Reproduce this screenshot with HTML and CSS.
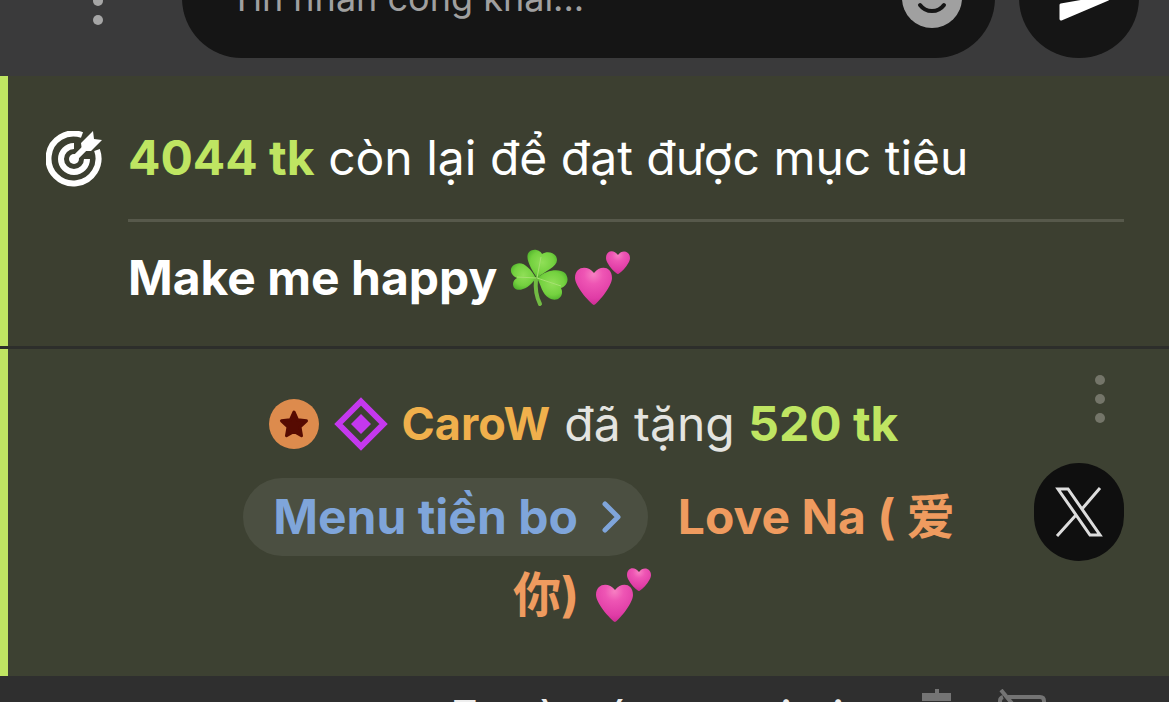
FILE: index.html
```
<!DOCTYPE html>
<html lang="vi">
<head>
    <meta charset="UTF-8">
    <meta name="viewport" content="width=device-width, initial-scale=1.0">
    <title>Chat</title>
    <link rel="stylesheet" href="styles.css">
</head>
<body>
    <svg class="sprite" aria-hidden="true">
        <defs>
            <radialGradient id="pink" cx="50%" cy="18%" r="85%">
                <stop offset="0" stop-color="#f77fc2"/>
                <stop offset="0.3" stop-color="#ee55b4"/>
                <stop offset="0.75" stop-color="#e03ca6"/>
                <stop offset="1" stop-color="#c92a91"/>
            </radialGradient>
            <radialGradient id="leaf" cx="50%" cy="45%" r="60%">
                <stop offset="0" stop-color="#90df57"/>
                <stop offset="0.65" stop-color="#74d13f"/>
                <stop offset="1" stop-color="#4fb02c"/>
            </radialGradient>
            <symbol id="hearts" viewBox="0 0 58 58">
                <path fill="url(#pink)" d="M20 56C18 56 1 38 1 29C1 17 14 16 20 24C26 16 38 17 38 29C38 38 22 56 20 56Z"/>
                <path fill="url(#pink)" d="M44 25C42 25 32 15 32 9C32 1 40 0 44 6C48 0 56 2 56 9C56 15 46 25 44 25Z"/>
            </symbol>
        </defs>
    </svg>

    <header class="topbar">
        <button class="dots" type="button" aria-label="Menu"><i></i><i></i><i></i></button>
        <form class="composer">
            <input class="composer-input" type="text" placeholder="Tin nhắn công khai..." aria-label="Tin nhắn công khai">
            <button class="emoji-btn" type="button" aria-label="Emoji">
                <svg viewBox="0 0 60 60" width="60" height="60">
                    <circle cx="30" cy="30" r="30" fill="#a0a0a0"/>
                    <circle cx="20" cy="22" r="4" fill="#151515"/>
                    <circle cx="40" cy="22" r="4" fill="#151515"/>
                    <path d="M18 37C24 45 36 45 42 37" fill="none" stroke="#151515" stroke-width="4" stroke-linecap="round"/>
                </svg>
            </button>
        </form>
        <button class="send" type="button" aria-label="Gửi">
            <svg viewBox="0 0 60 60" width="60" height="60">
                <path fill="#fff" stroke="#fff" stroke-width="3" stroke-linejoin="round" d="M12 10L59 31L12 51V37L46 31L12 25Z"/>
            </svg>
        </button>
    </header>

    <main>
        <section class="goal">
            <svg class="goal-icon" viewBox="0 0 56 56" width="56" height="56">
                <g fill="none" stroke="#fff">
                    <path stroke-width="6" d="M36 4A25 25 0 1 0 51 19"/>
                    <path stroke-width="6" d="M28 15A13 13 0 1 0 41 28"/>
                    <path stroke-width="6" d="M28 28L41 15"/>
                </g>
                <circle cx="28" cy="28" r="5" fill="#fff"/>
                <path fill="#fff" d="M35 12L47 0L48 8L56 9L45 20L36 20Z"/>
            </svg>
            <div class="goal-body">
                <p class="goal-left"><b class="tokens">4044 tk</b> còn lại để đạt được mục tiêu</p>
                <p class="goal-title">Make me happy
                    <svg class="emoji" viewBox="0 0 58 58" width="58" height="58">
                        <path fill="none" stroke="#72bb43" stroke-width="4" stroke-linecap="round" d="M26 30C25 40 27 49 30 55"/>
                        <g fill="url(#leaf)">
                            <path d="M27 29C22 21 14 9 19 3C24-2 31 2 32 5C38 1 47 4 47 11C47 18 35 22 27 29Z"/>
                            <path d="M26 29C17 43 3 44 3 35C3 32 5 30 7 29C-1 26-1 17 6 15C13 12 20 19 26 29Z"/>
                            <path d="M27 29C36 21 49 19 55 24C60 30 57 37 51 39C55 47 47 54 39 49C32 45 31 36 27 29Z"/>
                        </g>
                        <path fill="none" stroke="#a5e070" stroke-width="1" d="M27 29L31 8M26 29L7 28M27 29L51 37"/>
                    </svg>
                    <svg class="emoji" width="58" height="58"><use href="#hearts"/></svg>
                </p>
            </div>
        </section>

        <section class="tip">
            <div class="tip-body">
                <div class="tip-row first">
                    <svg class="badge" viewBox="0 0 52 52" width="52" height="52">
                        <circle cx="26" cy="26" r="25" fill="#dd8b4d"/>
                        <path fill="#560b02" stroke="#560b02" stroke-width="3" stroke-linejoin="round" d="M26 14L29.600 21.800L38.500 22.800L32 29L33.500 37.800L26 33.500L18.500 37.800L20 29L13.500 22.800L22.400 21.800Z"/>
                    </svg>
                    <svg class="badge" viewBox="0 0 54 54" width="54" height="54">
                        <path fill="none" stroke="#c438ee" stroke-width="6" d="M27 4.500L49.500 27L27 49.500L4.500 27Z"/>
                        <path fill="#c438ee" d="M27 17L37 27L27 37L17 27Z"/>
                    </svg>
                    <a class="user" href="#">CaroW</a>
                    <span class="action">đã tặng <b class="tokens">520 tk</b></span>
                </div>
                <div class="tip-row">
                    <button class="menu-btn" type="button">Menu tiền bo
                        <svg viewBox="0 0 20 32" width="20" height="32">
                            <path d="M3 3L16 16L3 29" fill="none" stroke="#7fa5da" stroke-width="5" stroke-linecap="round" stroke-linejoin="round"/>
                        </svg>
                    </button>
                    <span class="item">Love Na ( 爱</span>
                </div>
                <div class="tip-row">
                    <span class="item">你)</span>
                    <svg class="emoji" width="58" height="58"><use href="#hearts"/></svg>
                </div>
            </div>
            <div class="tip-actions">
                <button class="dots" type="button" aria-label="Thêm"><i></i><i></i><i></i></button>
                <a class="share" href="#" aria-label="X">
                    <svg viewBox="0 0 48 50" width="48" height="50">
                        <path fill="none" stroke="#ddd" stroke-width="3" d="M3 2H13L45 48H35ZM45 1L27 22M21 28L2 49"/>
                    </svg>
                </a>
            </div>
        </section>

        <section class="next">
            <span>Em à có xem ai ai</span>
            <svg viewBox="0 0 32 50" width="32" height="50">
                <path fill="#747474" d="M14 0H18V4H30V12H1V4H14Z"/>
            </svg>
            <svg viewBox="0 0 48 50" width="48" height="50">
                <path fill="none" stroke="#747474" stroke-width="4" d="M3 1L40 46M10 8H42Q46 8 46 12V40M2 40V12Q2 9 5 8"/>
            </svg>
        </section>
    </main>
</body>
</html>
```
FILE: styles.css
```
* {
    box-sizing: border-box;
}
body {
    margin: 0;
    height: 100vh;
    display: flex;
    flex-direction: column;
    overflow: hidden;
    background: #2f2f2f;
    color: #fff;
    font-family: Inter, "Noto Sans CJK SC", sans-serif;
    font-size: 48px;
    line-height: 78px;
}
p {
    margin: 0;
}
a {
    text-decoration: none;
}
button {
    border: none;
    padding: 0;
    background: none;
    font: inherit;
    color: inherit;
    cursor: pointer;
}
svg {
    flex-shrink: 0;
}
main {
    flex: 1;
    min-height: 0;
    overflow: hidden;
}
.sprite {
    position: absolute;
    width: 0;
    height: 0;
}

/* top bar, scrolled half out of view */
.topbar {
    display: flex;
    align-items: flex-end;
    height: 76px;
    flex-shrink: 0;
    padding: 0 30px 18px 74px;
    overflow: hidden;
    background: #3a3a3b;
}
.dots {
    display: flex;
    flex-direction: column;
    align-items: center;
    gap: 9px;
    width: 48px;
}
.dots i {
    width: 10px;
    height: 10px;
    border-radius: 50%;
    background: #747569;
}
.topbar .dots {
    margin: 0 60px 33px 0;
}
.topbar .dots i {
    background: #a6a6a6;
}
.composer {
    display: flex;
    flex: 1;
    align-items: center;
    height: 120px;
    margin-right: 24px;
    padding: 0 33px 0 48px;
    border-radius: 60px;
    background: #151515;
}
.composer-input {
    flex: 1;
    min-width: 0;
    padding: 0;
    border: none;
    outline: none;
    background: none;
    color: #fff;
    font: 36px/60px Inter, sans-serif;
}
.composer-input::placeholder {
    color: #a0a0a0;
}
.emoji-btn {
    height: 60px;
    line-height: 0;
}
.send {
    display: flex;
    align-items: center;
    justify-content: center;
    width: 120px;
    height: 120px;
    border-radius: 50%;
    background: #151515;
}

/* goal */
.goal {
    display: flex;
    align-items: flex-start;
    gap: 26px;
    padding: 43px 45px 29px 38px;
    border-left: 8px solid #bfe562;
    background: #3c3f30;
}
.goal-icon {
    margin-top: 12px;
}
.goal-body {
    flex: 1;
}
.goal-left {
    padding-bottom: 22px;
    border-bottom: 3px solid #57594b;
}
.goal-title {
    display: flex;
    align-items: center;
    padding-top: 17px;
    font-weight: 700;
}
.goal-title .emoji:first-of-type {
    margin: 0 6px 0 13px;
}
.tokens {
    color: #bfe562;
}

/* tip message */
.tip {
    display: flex;
    padding: 26px 45px 42px 132px;
    border-top: 3px solid #2d2e2b;
    background: #3d4132;
    box-shadow: inset 8px 0 #bfe562;
}
.tip-body {
    flex: 1;
    padding-top: 10px;
}
.tip-row {
    display: flex;
    justify-content: center;
    align-items: center;
    white-space: nowrap;
}
.tip-row.first {
    margin-bottom: 15px;
}
.badge {
    margin-right: 14px;
}
.user {
    margin-right: 14px;
    color: #f0b04c;
    font-size: 45px;
    font-weight: 700;
}
.action {
    color: #e4e4e0;
}
.menu-btn {
    display: flex;
    align-items: center;
    gap: 24px;
    margin: 0 30px 0 32px;
    padding: 0 26px 0 30px;
    border-radius: 39px;
    background: #4b4f41;
    color: #7fa5da;
    font-weight: 700;
}
.item {
    color: #ef9b5f;
    font-weight: 700;
}
.item + .emoji {
    margin-left: 16px;
}
.tip-actions {
    display: flex;
    flex-direction: column;
    align-items: flex-end;
    gap: 40px;
}
.share {
    display: flex;
    align-items: center;
    justify-content: center;
    width: 90px;
    height: 98px;
    border-radius: 45px;
    background: #0f0f0f;
}

/* next message, cut by the bottom edge */
.next {
    display: flex;
    padding: 13px 0 0 450px;
    color: #eee;
    line-height: 58px;
}
.next span {
    margin-right: auto;
}
.next svg {
    margin-right: 45px;
}
.next svg:last-child {
    margin-right: 123px;
}
```
